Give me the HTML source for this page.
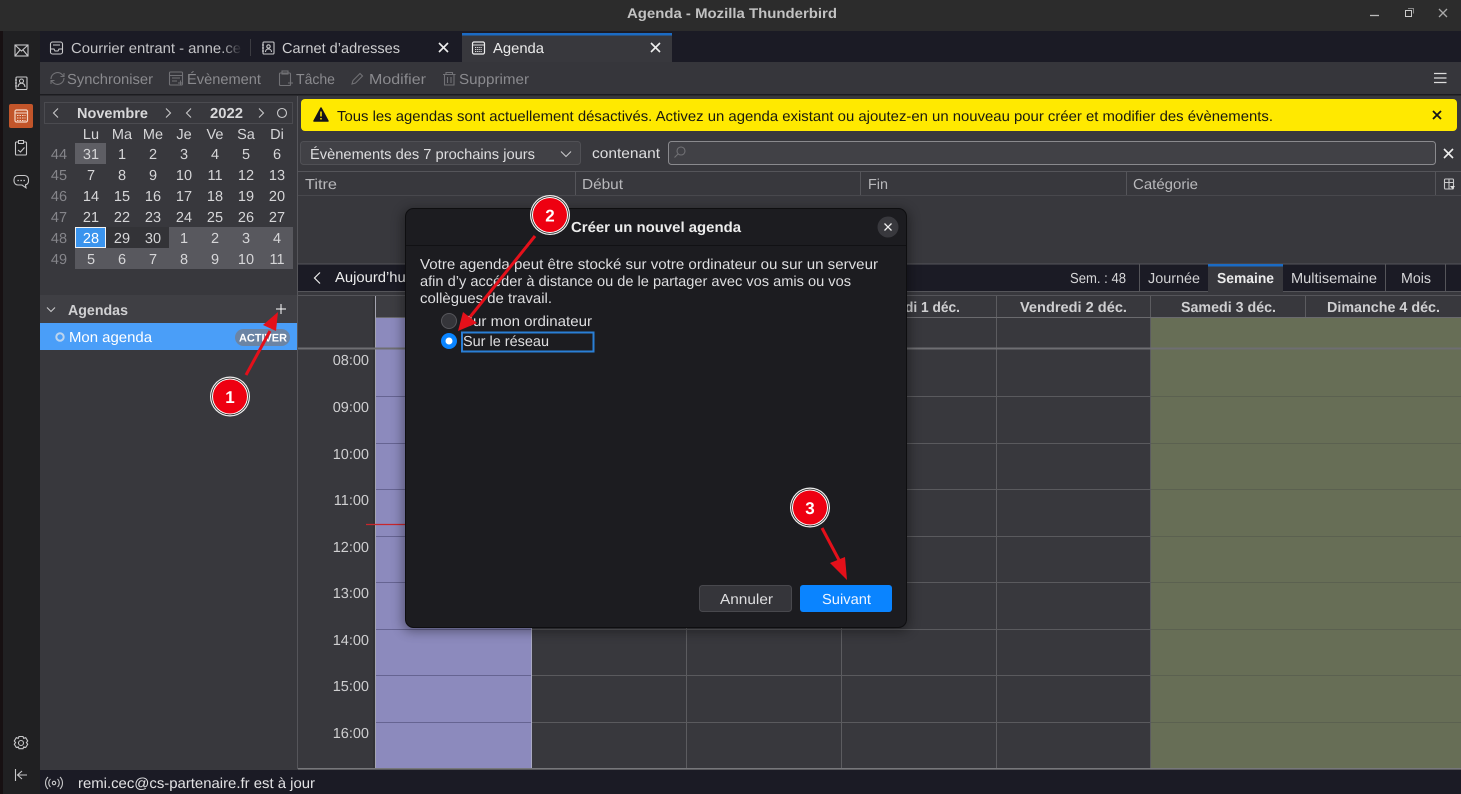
<!DOCTYPE html>
<html lang="fr"><head><meta charset="utf-8"><title>Agenda - Mozilla Thunderbird</title>
<style>
html,body{margin:0;padding:0;background:#38383d;width:1461px;height:794px;overflow:hidden}
svg{display:block}
text{font-family:"Liberation Sans",sans-serif;font-size:14.5px;fill:#dedee0;text-rendering:geometricPrecision}
.b{font-weight:bold}
.m text{text-anchor:middle;fill:#d6d6d8}
.w text{text-anchor:middle;fill:#85858a}
.tb{fill:#8a8a8e}
.i{fill:none;stroke:#c8c8ca;stroke-width:1.1}
.g{fill:none;stroke:#717175;stroke-width:1.1}
.x{fill:none;stroke:#eee;stroke-width:1.6}
.h text{text-anchor:end;fill:#cfcfd1}
</style></head><body>
<svg width="1461" height="794" viewBox="0 0 1461 794" xmlns="http://www.w3.org/2000/svg">
<defs>
<linearGradient id="fade"><stop offset="0" stop-color="#1b1b25" stop-opacity="0"/><stop offset="1" stop-color="#1b1b25"/></linearGradient>
<filter id="sh" x="-10%" y="-10%" width="120%" height="120%"><feGaussianBlur stdDeviation="6"/></filter>
</defs>
<!-- frame -->
<rect width="1461" height="794" fill="#38383d"/>
<rect width="1461" height="31" fill="#2c2c2c"/>
<text class="b" x="627" y="18" textLength="210" lengthAdjust="spacingAndGlyphs" style="fill:#c2c2c2;font-size:14px">Agenda - Mozilla Thunderbird</text>
<path d="M1370 15.500h9" stroke="#bbb" stroke-width="1.300"/>
<rect x="1405.500" y="10.500" width="6" height="6" fill="none" stroke="#ccc"/><path d="M1408 8.500h5.500v5" fill="none" stroke="#888"/>
<path d="M1439 9l8 8M1447 9l-8 8" stroke="#aaa" stroke-width="1.300"/>
<!-- spaces bar -->
<rect y="31" width="40" height="763" fill="#202022"/>
<rect y="31" width="3" height="763" fill="#171012"/>
<rect x="15" y="45" width="13" height="11" class="i"/><path class="i" d="M15 45l6.500 6 6.500-6M15 56l5-6M28 56l-5-6"/>
<rect x="16" y="77" width="11" height="12.500" rx="1" class="i"/><path class="i" d="M18 87c0-5 7-5 7 0M15 80h2M15 83h2M15 86h2"/><circle class="i" cx="21.500" cy="81" r="2"/>
<rect x="9" y="104" width="24" height="24" rx="2" fill="#c2552a"/>
<rect x="15" y="110" width="12.500" height="12" rx="1.500" fill="none" stroke="#f4d8c8" stroke-width="1.200"/><path d="M15 113h12.500" stroke="#f4d8c8"/><path d="M17 115.500h8.500M17 118h8.500M17 120.500h8.500" stroke="#f4d8c8" stroke-dasharray="1.500 1"/>
<rect x="15.500" y="142" width="11" height="13" rx="1" class="i"/><rect x="18.500" y="140.500" width="5" height="3" fill="#202022" stroke="#c8c8ca"/><path class="i" d="M18 150l2.500 2 4-4.500"/>
<path class="i" d="M18 175.500h6.500a4 4 0 0 1 4 4v1.500a4 4 0 0 1-3 3.800l.5 3-4-2.800H18a4 4 0 0 1-4-4v-1.500a4 4 0 0 1 4-4z"/>
<path d="M17.500 180.500h7.500" stroke="#d8d8da" stroke-width="1.300" stroke-dasharray="1.300 1.700"/>
<circle class="i" cx="21" cy="743" r="2.500"/><path class="i" d="M19 736.500h4l.7 1.800 2-.6 2 3.300-1.300 1.600 1.300 1.600-2 3.300-2-.6-.7 1.800h-4l-.7-1.800-2 .6-2-3.300 1.300-1.600-1.300-1.600 2-3.300 2 .6z"/>
<path class="i" d="M15.500 769v12M27 775H18M22 771l-4.500 4 4.500 4"/>
<!-- tabs -->
<rect x="40" y="31" width="1421" height="31" fill="#1b1b25"/>
<rect x="50.500" y="42" width="12" height="12" rx="2" class="i"/><path class="i" d="M53 45h7M50.500 49h3.500l1 2h3l1-2h3.500"/>
<text x="71" y="53" textLength="170" lengthAdjust="spacingAndGlyphs" style="fill:#c4c4c7">Courrier entrant - anne.ce</text>
<rect x="222" y="40" width="20" height="18" fill="url(#fade)"/>
<path d="M250.500 39v17" stroke="#3c3c42"/>
<rect x="263" y="42" width="11" height="12" rx="1" class="i"/><path class="i" d="M265.500 52c0-4 6-4 6 0M262 45h2M262 48h2M262 51h2"/><circle class="i" cx="268.500" cy="46.500" r="1.700"/>
<text x="282" y="53" textLength="118" lengthAdjust="spacingAndGlyphs" style="fill:#cdcdcf">Carnet d’adresses</text>
<path class="x" d="M439 43l9 9M448 43l-9 9"/>
<rect x="462" y="33" width="210" height="29" fill="#38383d"/>
<rect x="462" y="33" width="210" height="2.500" fill="#1b6bc4"/>
<rect x="472.500" y="42" width="12" height="12" rx="1.500" fill="none" stroke="#eee" stroke-width="1.200"/><path d="M472.500 45h12" stroke="#ddd"/><path d="M475 47.500h7M475 49.500h7M475 51.500h7" stroke="#ddd" stroke-dasharray="1.300 .8"/>
<text x="493" y="53" textLength="51" lengthAdjust="spacingAndGlyphs" style="fill:#ebebeb">Agenda</text>
<path class="x" d="M651 43l9 9M660 43l-9 9"/>
<!-- toolbar -->
<rect x="40" y="62" width="1421" height="32" fill="#36363b"/>
<rect x="40" y="94" width="1421" height="1.500" fill="#1c1c20"/>
<path class="g" d="M51 79a6.500 6.500 0 0 1 11-4.500l2 2M64 78a6.500 6.500 0 0 1-11 4.500l-2-2M64 73v3.500h-3.500M51 84v-3.500h3.500"/>
<text class="tb" x="67" y="84" textLength="86" lengthAdjust="spacingAndGlyphs">Synchroniser</text>
<rect x="169.500" y="72" width="13" height="13" rx="1" class="g"/><path class="g" d="M169.500 75.500h13M172 78h8M172 81h5M178 83h5M180.500 80.500v5"/>
<text class="tb" x="187" y="84" textLength="74" lengthAdjust="spacingAndGlyphs">Évènement</text>
<rect x="279.500" y="73" width="11" height="12.500" rx="1" class="g"/><rect x="282" y="71" width="6" height="3" class="g"/><path class="g" d="M288 83h5M290.500 80.500v5"/>
<text class="tb" x="296" y="84" textLength="39" lengthAdjust="spacingAndGlyphs">Tâche</text>
<path class="g" d="M352 84l1-3.500 7-7 2.500 2.500-7 7z"/>
<text class="tb" x="369" y="84" textLength="57" lengthAdjust="spacingAndGlyphs">Modifier</text>
<path class="g" d="M443 74.500h12.500M446 74.500v-2h6.500v2M444.500 74.500v10.500h9.500V74.500M447.500 77v6M451 77v6"/>
<text class="tb" x="459" y="84" textLength="70" lengthAdjust="spacingAndGlyphs">Supprimer</text>
<path d="M1434 73.500h12.500M1434 78h12.500M1434 82.500h12.500" stroke="#ddd" stroke-width="1.200"/>
<!-- left pane -->
<rect x="40" y="96" width="257" height="199" fill="#38383d"/>
<rect x="44.500" y="102.500" width="248" height="21" fill="none" stroke="#5e5e62" stroke-dasharray="1 1"/>
<path d="M58 108.500l-4.500 4.500 4.500 4.500M166 108.500l4.500 4.500-4.500 4.500M191 108.500l-4.500 4.500 4.500 4.500M259 108.500l4.500 4.500-4.500 4.500" class="i"/>
<circle cx="282" cy="113" r="4.500" class="i"/>
<text class="b" x="77" y="118" textLength="71" lengthAdjust="spacingAndGlyphs" style="fill:#d8d8da">Novembre</text>
<text class="b" x="210" y="118" textLength="33" lengthAdjust="spacingAndGlyphs" style="fill:#d8d8da">2022</text>
<rect x="75" y="143" width="31" height="21" fill="#5e5e64"/>
<rect x="106" y="227" width="63" height="21" fill="#333337"/>
<rect x="169" y="227" width="124" height="21" fill="#58585e"/>
<rect x="75" y="248" width="218" height="21" fill="#58585e"/>
<rect x="75.500" y="227.500" width="30" height="20" fill="#3a94ee" stroke="#f2f2f2"/>
<g class="m">
<text x="91" y="139">Lu</text><text x="122" y="139">Ma</text><text x="153" y="139">Me</text><text x="184" y="139">Je</text><text x="215" y="139">Ve</text><text x="246" y="139">Sa</text><text x="277" y="139">Di</text>
<text x="91" y="159">31</text><text x="122" y="159">1</text><text x="153" y="159">2</text><text x="184" y="159">3</text><text x="215" y="159">4</text><text x="246" y="159">5</text><text x="277" y="159">6</text>
<text x="91" y="180">7</text><text x="122" y="180">8</text><text x="153" y="180">9</text><text x="184" y="180">10</text><text x="215" y="180">11</text><text x="246" y="180">12</text><text x="277" y="180">13</text>
<text x="91" y="201">14</text><text x="122" y="201">15</text><text x="153" y="201">16</text><text x="184" y="201">17</text><text x="215" y="201">18</text><text x="246" y="201">19</text><text x="277" y="201">20</text>
<text x="91" y="222">21</text><text x="122" y="222">22</text><text x="153" y="222">23</text><text x="184" y="222">24</text><text x="215" y="222">25</text><text x="246" y="222">26</text><text x="277" y="222">27</text>
<text x="91" y="243" style="fill:#fff">28</text><text x="122" y="243">29</text><text x="153" y="243">30</text><text x="184" y="243">1</text><text x="215" y="243">2</text><text x="246" y="243">3</text><text x="277" y="243">4</text>
<text x="91" y="264">5</text><text x="122" y="264">6</text><text x="153" y="264">7</text><text x="184" y="264">8</text><text x="215" y="264">9</text><text x="246" y="264">10</text><text x="277" y="264">11</text>
</g>
<g class="w"><text x="59" y="159">44</text><text x="59" y="180">45</text><text x="59" y="201">46</text><text x="59" y="222">47</text><text x="59" y="243">48</text><text x="59" y="264">49</text></g>
<rect x="40" y="295" width="257" height="28" fill="#3f3f44"/>
<path class="i" d="M47 307.500l4 4 4-4"/>
<text class="b" x="68" y="315" textLength="60" lengthAdjust="spacingAndGlyphs" style="fill:#d0d0d2">Agendas</text>
<path d="M281 304v10M276 309h10" stroke="#fff" stroke-width="1"/>
<rect x="40" y="323" width="257" height="27" fill="#4a9ef8"/>
<circle cx="60" cy="337" r="3.700" fill="none" stroke="#bcd4ee" stroke-width="2"/>
<text x="69" y="342" textLength="83" lengthAdjust="spacingAndGlyphs" style="fill:#fff">Mon agenda</text>
<rect x="235" y="329" width="55" height="17" rx="8.500" fill="#6b84a4"/>
<text class="b" x="239" y="341.500" textLength="48" lengthAdjust="spacingAndGlyphs" style="fill:#fff;font-size:11px">ACTIVER</text>
<rect x="297" y="96" width="1" height="673" fill="#55555a"/>
<!-- notification -->
<rect x="301" y="99" width="1156" height="32" rx="4" fill="#ffe900"/>
<path d="M321 108l7 13h-14z" fill="#15141a" stroke="#15141a" stroke-linejoin="round" stroke-width="1.500"/><path d="M321 111.500v5M321 118v1.500" stroke="#ffe900" stroke-width="1.500"/>
<text x="337" y="121" textLength="936" lengthAdjust="spacingAndGlyphs" style="fill:#1a1a10">Tous les agendas sont actuellement désactivés. Activez un agenda existant ou ajoutez-en un nouveau pour créer et modifier des évènements.</text>
<path d="M1433 111l8 8M1441 111l-8 8" fill="none" stroke="#15141a" stroke-width="1.800"/>
<!-- filter -->
<rect x="300.500" y="141.500" width="280" height="23" rx="3" fill="#414146" stroke="#505055"/>
<text x="310" y="159" textLength="225" lengthAdjust="spacingAndGlyphs">Évènements des 7 prochains jours</text>
<path class="i" d="M561 151.500l5 5 5-5"/>
<text x="592" y="158" textLength="68" lengthAdjust="spacingAndGlyphs">contenant</text>
<rect x="668.500" y="141.500" width="767" height="23" rx="3" fill="#414146" stroke="#8a8a8e"/>
<circle cx="681" cy="151" r="4" class="g"/><path class="g" d="M678 154l-3.500 3.500"/>
<path class="x" d="M1444 149l9 9M1453 149l-9 9"/>
<!-- tree -->
<rect x="298" y="171" width="1163" height="1" fill="#55555a"/>
<rect x="298" y="195" width="1163" height="1" fill="#48484d"/>
<path d="M575.500 172v23M860.500 172v23M1126.500 172v23M1435.500 172v23" stroke="#55555a"/>
<text x="305" y="189" textLength="32" lengthAdjust="spacingAndGlyphs" style="fill:#b8b8bb">Titre</text>
<text x="582" y="189" textLength="41" lengthAdjust="spacingAndGlyphs" style="fill:#b8b8bb">Début</text>
<text x="868" y="189" textLength="20" lengthAdjust="spacingAndGlyphs" style="fill:#b8b8bb">Fin</text>
<text x="1133" y="189" textLength="65" lengthAdjust="spacingAndGlyphs" style="fill:#b8b8bb">Catégorie</text>
<rect x="1444.500" y="179" width="9" height="10" rx="1" class="i"/><path class="i" d="M1444.500 182.500h9M1449 179v10"/><path d="M1450 186h5l-2.500 3z" fill="#ddd"/>
<!-- nav -->
<rect x="298" y="264" width="1163" height="28" fill="#1b1b25"/>
<rect x="298" y="263.500" width="1163" height="1" fill="#55555a"/>
<rect x="298" y="291" width="1163" height="1" fill="#55555a"/>
<path d="M320 272.500l-5.500 5.500 5.500 5.500" class="x" style="stroke-width:1.200"/>
<text x="335" y="282" textLength="74" lengthAdjust="spacingAndGlyphs" style="fill:#eee">Aujourd’hui</text>
<text x="1070" y="283" textLength="56" lengthAdjust="spacingAndGlyphs" style="fill:#d6d6d8">Sem. : 48</text>
<path d="M1139.500 264v28M1282.500 264v28M1385.500 264v28M1445.500 264v28" stroke="#55555a"/>
<rect x="1208" y="264" width="75" height="31" fill="#38383d"/>
<rect x="1208" y="264" width="75" height="2.500" fill="#1b6bc4"/>
<text x="1148" y="283" textLength="52" lengthAdjust="spacingAndGlyphs" style="fill:#d0d0d2">Journée</text>
<text class="b" x="1217" y="283" textLength="57" lengthAdjust="spacingAndGlyphs" style="fill:#eaeaea">Semaine</text>
<text x="1291" y="283" textLength="86" lengthAdjust="spacingAndGlyphs" style="fill:#d6d6d8">Multisemaine</text>
<text x="1401" y="283" textLength="30" lengthAdjust="spacingAndGlyphs" style="fill:#d6d6d8">Mois</text>
<!-- grid -->
<rect x="376" y="296" width="155" height="22" fill="#3d3d42"/>
<rect x="376" y="318" width="155" height="451" fill="#8c8abd"/>
<rect x="1151" y="318" width="310" height="451" fill="#676e56"/>
<path d="M374 296v473" stroke="#2c2c30" stroke-width="1"/>
<path d="M375.500 296v473" stroke="#a4a4b0"/>
<path d="M531.500 318v451" stroke="#a9a9c4"/>
<path d="M531.500 296v22M686.500 296v473M841.500 296v473M996.500 296v473M1150.500 296v473M1305.500 296v22" stroke="#5c5c60"/>
<path d="M298 295.500h1163" stroke="#55555a"/>
<path d="M376 317.500h1085" stroke="#6a6a6e"/>
<path d="M298 348.500h1163" stroke="#6e6e72" stroke-width="2"/>
<path d="M532 396.500h619M532 443.500h619M532 489.500h619M532 536.500h619M532 582.500h619M532 629.500h619M532 675.500h619M532 722.500h619" stroke="#5a5a5e"/>
<path d="M1151 396.500h310M1151 443.500h310M1151 489.500h310M1151 536.500h310M1151 582.500h310M1151 629.500h310M1151 675.500h310M1151 722.500h310" stroke="#5b6150"/>
<path d="M376 396.500h155M376 443.500h155M376 489.500h155M376 536.500h155M376 582.500h155M376 629.500h155M376 675.500h155M376 722.500h155" stroke="#666492"/>
<rect x="298" y="768" width="1163" height="1.500" fill="#77777b"/>
<path d="M366 524.500h40" stroke="#c8262c" stroke-width="1.300"/>
<g class="h"><text x="369" y="365">08:00</text><text x="369" y="412">09:00</text><text x="369" y="459">10:00</text><text x="369" y="505">11:00</text><text x="369" y="552">12:00</text><text x="369" y="598">13:00</text><text x="369" y="645">14:00</text><text x="369" y="691">15:00</text><text x="369" y="738">16:00</text></g>
<text class="b" x="905" y="312" textLength="55" lengthAdjust="spacingAndGlyphs" style="fill:#cfcfd1">di 1 déc.</text>
<text class="b" x="1020" y="312" textLength="107" lengthAdjust="spacingAndGlyphs" style="fill:#cfcfd1">Vendredi 2 déc.</text>
<text class="b" x="1181" y="312" textLength="95" lengthAdjust="spacingAndGlyphs" style="fill:#cfcfd1">Samedi 3 déc.</text>
<text class="b" x="1327" y="312" textLength="113" lengthAdjust="spacingAndGlyphs" style="fill:#cfcfd1">Dimanche 4 déc.</text>
<!-- status -->
<rect x="40" y="770" width="1421" height="24" fill="#1b1b25"/>
<circle cx="54" cy="783" r="1.700" class="i"/><path class="i" d="M50.500 779a5.500 5.500 0 0 0 0 8M57.500 779a5.500 5.500 0 0 1 0 8M48 777a8.500 8.500 0 0 0 0 12M60 777a8.500 8.500 0 0 1 0 12"/>
<text x="78" y="788" textLength="237" lengthAdjust="spacingAndGlyphs" style="fill:#e2e2e4">remi.cec@cs-partenaire.fr est à jour</text>
<!-- dialog -->
<rect x="403" y="210" width="506" height="421" rx="8" fill="#000" opacity=".4" filter="url(#sh)"/>
<rect x="405.500" y="208.500" width="501" height="419" rx="8" fill="#1c1c20" stroke="#0e0e10"/>
<path d="M406 245.500h500" stroke="#111114"/>
<text class="b" x="571" y="232" textLength="170" lengthAdjust="spacingAndGlyphs" style="fill:#ececec">Créer un nouvel agenda</text>
<circle cx="888" cy="227" r="10.500" fill="#38383d"/>
<path d="M884.500 223.500l7 7M891.500 223.500l-7 7" stroke="#eee" stroke-width="1.300"/>
<text x="420" y="269" textLength="458" lengthAdjust="spacingAndGlyphs">Votre agenda peut être stocké sur votre ordinateur ou sur un serveur</text>
<text x="420" y="286" textLength="431" lengthAdjust="spacingAndGlyphs">afin d’y accéder à distance ou de le partager avec vos amis ou vos</text>
<text x="420" y="303" textLength="132" lengthAdjust="spacingAndGlyphs">collègues de travail.</text>
<circle cx="449" cy="321" r="7.500" fill="#35353a" stroke="#57575c" stroke-width="1"/>
<text x="463" y="326" textLength="129" lengthAdjust="spacingAndGlyphs">Sur mon ordinateur</text>
<circle cx="449" cy="341" r="8" fill="#0a84ff"/><circle cx="449" cy="341" r="3.500" fill="#fff"/>
<rect x="462" y="332.500" width="131.500" height="19" fill="none" stroke="#2a7fd6" stroke-width="2"/>
<text x="463" y="346" textLength="86" lengthAdjust="spacingAndGlyphs">Sur le réseau</text>
<rect x="699.500" y="585.500" width="92" height="26" rx="3" fill="#35353a" stroke="#48484d"/>
<text x="720" y="604" textLength="53" lengthAdjust="spacingAndGlyphs">Annuler</text>
<rect x="800" y="585" width="92" height="27" rx="3" fill="#0a84ff"/>
<text x="822" y="604" textLength="49" lengthAdjust="spacingAndGlyphs" style="fill:#f0f5ff">Suivant</text>
<!-- annotations -->
<g fill="#e4101a" stroke="none">
<path d="M246 375l24-44" stroke="#e4101a" stroke-width="3"/><path d="M278 312l-15 13 13 6z"/>
<path d="M535 236L470 317" stroke="#e4101a" stroke-width="3"/><path d="M458 331l5-19 14 11z"/>
<path d="M822 528l17 32" stroke="#e4101a" stroke-width="3"/><path d="M847 580l-17-17 15-6z"/>
</g>
<g>
<circle cx="230" cy="396.500" r="20" fill="#eee"/><circle cx="230" cy="396.500" r="18.800" fill="#222"/><circle cx="230" cy="396.500" r="18" fill="#fff"/><circle cx="230" cy="396.500" r="17" fill="#ee0011"/>
<circle cx="550" cy="215" r="20" fill="#eee"/><circle cx="550" cy="215" r="18.800" fill="#222"/><circle cx="550" cy="215" r="18" fill="#fff"/><circle cx="550" cy="215" r="17" fill="#ee0011"/>
<circle cx="810" cy="507.500" r="20" fill="#eee"/><circle cx="810" cy="507.500" r="18.800" fill="#222"/><circle cx="810" cy="507.500" r="18" fill="#fff"/><circle cx="810" cy="507.500" r="17" fill="#ee0011"/>
<text class="b" x="230" y="403" text-anchor="middle" style="fill:#fff;font-size:17px">1</text>
<text class="b" x="550" y="221.500" text-anchor="middle" style="fill:#fff;font-size:17px">2</text>
<text class="b" x="810" y="514" text-anchor="middle" style="fill:#fff;font-size:17px">3</text>
</g>
</svg>
</body></html>
